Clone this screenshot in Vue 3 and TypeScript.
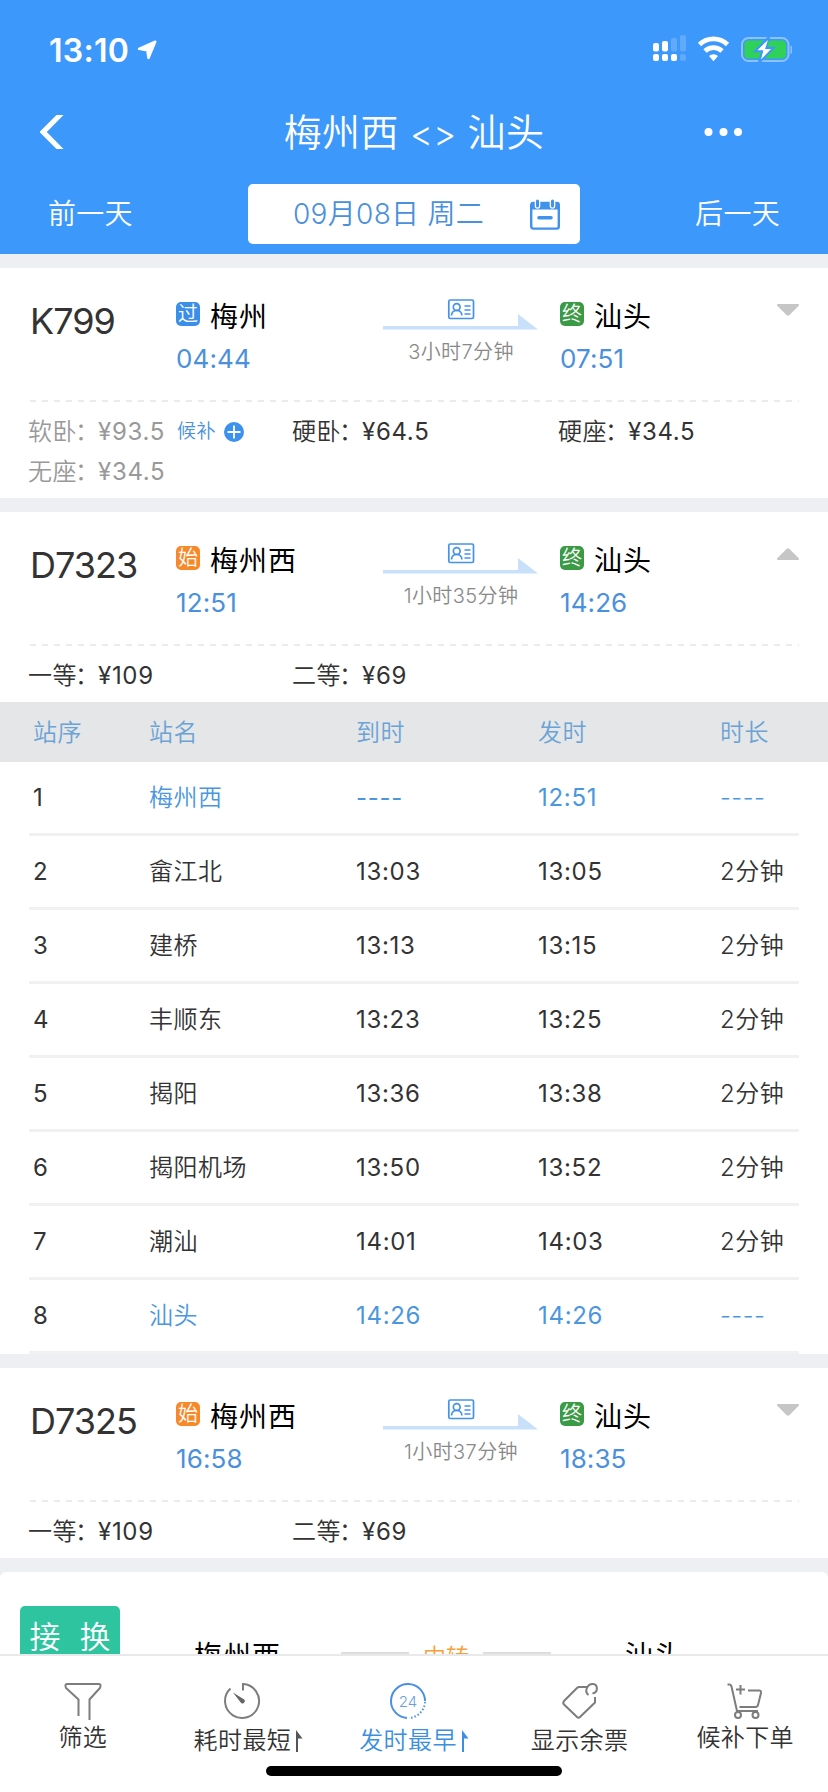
<script setup lang="ts">
interface Seat {
  label: string
  price: string
  soldOut?: boolean
  waitlist?: boolean
}

interface Stop {
  no: number
  name: string
  arrive: string
  depart: string
  stay: string
  edge?: boolean
}

interface Train {
  code: string
  kind: 'pass' | 'start'
  badge: string
  from: string
  depart: string
  to: string
  arrive: string
  duration: string
  seats: Seat[]
  stops?: Stop[]
}

const none = '----'

const trains: Train[] = [
  {
    code: 'K799', kind: 'pass', badge: '过', from: '梅州', depart: '04:44', to: '汕头', arrive: '07:51', duration: '3小时7分钟',
    seats: [
      { label: '软卧', price: '¥93.5', soldOut: true, waitlist: true },
      { label: '硬卧', price: '¥64.5' },
      { label: '硬座', price: '¥34.5' },
      { label: '无座', price: '¥34.5', soldOut: true },
    ],
  },
  {
    code: 'D7323', kind: 'start', badge: '始', from: '梅州西', depart: '12:51', to: '汕头', arrive: '14:26', duration: '1小时35分钟',
    seats: [{ label: '一等', price: '¥109' }, { label: '二等', price: '¥69' }],
    stops: [
      { no: 1, name: '梅州西', arrive: none, depart: '12:51', stay: none, edge: true },
      { no: 2, name: '畲江北', arrive: '13:03', depart: '13:05', stay: '2分钟' },
      { no: 3, name: '建桥', arrive: '13:13', depart: '13:15', stay: '2分钟' },
      { no: 4, name: '丰顺东', arrive: '13:23', depart: '13:25', stay: '2分钟' },
      { no: 5, name: '揭阳', arrive: '13:36', depart: '13:38', stay: '2分钟' },
      { no: 6, name: '揭阳机场', arrive: '13:50', depart: '13:52', stay: '2分钟' },
      { no: 7, name: '潮汕', arrive: '14:01', depart: '14:03', stay: '2分钟' },
      { no: 8, name: '汕头', arrive: '14:26', depart: '14:26', stay: none, edge: true },
    ],
  },
  {
    code: 'D7325', kind: 'start', badge: '始', from: '梅州西', depart: '16:58', to: '汕头', arrive: '18:35', duration: '1小时37分钟',
    seats: [{ label: '一等', price: '¥109' }, { label: '二等', price: '¥69' }],
  },
]
</script>

<template>
  <div class="screen">
    <header class="top">
      <div class="status">
        <span class="clock">13:10</span>
        <svg class="locate" width="20" height="20" viewBox="0 0 20 20"><path d="M18.300 1.700L11.500 18 10.300 10.300 2 8.900z" fill="#fff" stroke="#fff" stroke-width="2.400" stroke-linejoin="round" /></svg>
        <svg class="signals" width="140" height="28" viewBox="0 0 140 28">
          <g fill="#fff">
            <rect x="1" y="8" width="6" height="8.500" rx="2" /><rect x="10" y="6" width="6" height="10.500" rx="2" />
            <rect x="1" y="19" width="6" height="7" rx="2" /><rect x="10" y="19" width="6" height="7" rx="2" /><rect x="19" y="19" width="6" height="7" rx="2" />
            <g opacity=".18"><rect x="19" y="3" width="6" height="13.500" rx="2" /><rect x="28" y="0" width="6" height="16.500" rx="2" /><rect x="28" y="19" width="6" height="7" rx="2" /></g>
          </g>
          <g fill="none" stroke="#fff" stroke-width="4.800">
            <path d="M47.500 9.500a20 20 0 0 1 28 0" /><path d="M53 15.900a12.500 12.500 0 0 1 17 0" />
          </g>
          <path d="M57 21a6.500 6.500 0 0 1 9 0l-4.500 5.300z" fill="#fff" />
          <rect x="90" y="3" width="46.500" height="23" rx="6.500" fill="none" stroke="#8cc3ff" stroke-width="2" />
          <path d="M138.500 10.500v8.500c3.700-1.500 3.700-7 0-8.500z" fill="#8cc3ff" />
          <rect x="92.500" y="5.500" width="41.500" height="18" rx="4" fill="#30d158" />
          <path d="M117 2l-13.500 14h7l-3.500 11.500 14-14.500h-7.500z" fill="#fff" stroke="#3d98fb" stroke-width="2.500" />
          <path d="M116 5l-10.500 10.300h6l-2.500 9.200 10-10.500h-6z" fill="#fff" />
        </svg>
      </div>
      <div class="nav">
        <svg class="back" width="26" height="36" viewBox="0 0 26 36"><path d="M17.500 1h7L7.800 18l16.700 17h-7L1 18.500v-1z" fill="#fff" /></svg>
        <h1 class="title">梅州西 <span class="swap">&lt;&gt;</span> 汕头</h1>
        <svg class="more" width="40" height="10" viewBox="0 0 40 10" fill="#fff"><circle cx="4.500" cy="5" r="4" /><circle cx="19.500" cy="5" r="4" /><circle cx="34" cy="5" r="4" /></svg>
      </div>
      <div class="days">
        <span class="day">前一天</span>
        <div class="date">
          <span class="date-text">09月08日 周二</span>
          <svg width="30" height="31" viewBox="0 0 30 31">
            <rect x="1.200" y="4" width="27.600" height="25.600" rx="2" fill="#fff" stroke="#4192ec" stroke-width="2.400" />
            <rect x="1" y="3" width="28" height="7.500" fill="#4192ec" />
            <g stroke-linecap="round"><path d="M7.500 2.500v4.500M22.500 2.500v4.500" stroke="#fff" stroke-width="5.600" /><path d="M7.500 2v5M22.500 2v5" stroke="#4192ec" stroke-width="3" /><path d="M9 18.700h12" stroke="#4192ec" stroke-width="3.600" /></g>
          </svg>
        </div>
        <span class="day">后一天</span>
      </div>
    </header>

    <main class="list">
      <section v-for="t in trains" :key="t.code" class="card">
        <div class="summary">
          <span class="code">{{ t.code }}</span>
          <div class="place">
            <div class="station"><i class="badge" :class="t.kind">{{ t.badge }}</i><b>{{ t.from }}</b></div>
            <span class="time">{{ t.depart }}</span>
          </div>
          <div class="route">
            <svg width="156" height="32" viewBox="0 0 156 32">
              <path d="M0 27h135V15l20 15.500H0z" fill="#c9e0fb" />
              <g fill="none" stroke="#4592e8" stroke-width="1.700">
                <rect x="65.800" y="1" width="24.700" height="18.500" rx="1.500" />
                <circle cx="73.700" cy="8" r="3.400" /><path d="M68.500 16.500c.2-3 2-5 5.200-5s5 2 5.200 5M81.500 7h6M81.500 11h6M81.500 15h6" />
              </g>
            </svg>
            <span class="duration">{{ t.duration }}</span>
          </div>
          <div class="place">
            <div class="station"><i class="badge end">终</i><b>{{ t.to }}</b></div>
            <span class="time">{{ t.arrive }}</span>
          </div>
          <svg class="caret" :class="{ open: t.stops }" width="24" height="12" viewBox="0 0 24 12"><path d="M1.500 0h21q1 1 0 2L13.500 11q-1.500 1.500-3 0L1.500 2q-1-1 0-2z" fill="#c6c6c6" /></svg>
        </div>
        <svg class="dash" width="770" height="2"><path d="M1 1H770" stroke="#ebebeb" stroke-width="2" stroke-dasharray="6 6" /></svg>
        <div class="seats">
          <div v-for="s in t.seats" :key="s.label" class="seat" :class="{ out: s.soldOut }">
            <span class="seat-label">{{ s.label }}<span class="colon">：</span></span><span class="price">{{ s.price }}</span>
            <template v-if="s.waitlist">
              <span class="wait">候补</span>
              <svg width="20" height="20" viewBox="0 0 20 20"><circle cx="10" cy="10" r="10" fill="#3c90ee" /><path d="M3.500 10h13M10 3.500v13" stroke="#fff" stroke-width="1.800" /></svg>
            </template>
          </div>
        </div>
        <div v-if="t.stops" class="stops">
          <div class="row head"><span>站序</span><span>站名</span><span>到时</span><span>发时</span><span>时长</span></div>
          <div v-for="p in t.stops" :key="p.no" class="row" :class="{ edge: p.edge }">
            <span class="no">{{ p.no }}</span><span>{{ p.name }}</span><span class="num">{{ p.arrive }}</span><span class="num">{{ p.depart }}</span><span>{{ p.stay }}</span>
          </div>
        </div>
      </section>

      <section class="card transfer">
        <span class="tag"><span>接</span><span>换</span></span>
        <b class="t-from">梅州西</b>
        <div class="via"><i></i><span>中转</span><i></i></div>
        <b>汕头</b>
      </section>
    </main>

    <footer class="tabs">
      <div class="tab high">
        <svg width="38" height="38" viewBox="0 0 38 38"><path d="M14.500 34V17.500L2 6Q.5 2 3 2h32q2.500 0 1 4L25.500 17.500V38" /></svg>
        <span>筛选</span>
      </div>
      <div class="tab sort">
        <svg width="38" height="38" viewBox="0 0 38 38"><path d="M20 8.500V2A17 17 0 1 1 7.500 6.500" /><path d="M10 10.500l10.800 6.700a2.300 2.300 0 1 1-3.300 3.100z" class="solid" /></svg>
        <span>耗时最短<svg class="flag" width="8" height="22" viewBox="0 0 8 22"><path d="M1 0l6.500 8.500H3V22H1z" fill="#555" /></svg></span>
      </div>
      <div class="tab sort active">
        <svg width="38" height="38" viewBox="0 0 38 38"><path d="M18 36A17 17 0 1 1 36 19" /><path d="M36 20A17 17 0 0 1 20 36" stroke-dasharray="1.500 2" /><text x="19" y="24.500" text-anchor="middle">24</text></svg>
        <span>发时最早<svg class="flag" width="8" height="22" viewBox="0 0 8 22"><path d="M1 0l6.500 8.500H3V22H1z" fill="#3b8fe0" /></svg></span>
      </div>
      <div class="tab">
        <svg width="38" height="38" viewBox="0 0 38 38"><path d="M26 5H18q-1 0-2 1L3 19q-1.500 2 0 3.500L16 35q1.500 1.500 3 0L34 20.500V15" /><path d="M27.500 13C22.500 9 27 1.500 32 2c5 .5 5.500 8-.5 9.500" /></svg>
        <span>显示余票</span>
      </div>
      <div class="tab high">
        <svg width="38" height="38" viewBox="0 0 38 38"><path d="M1.500 2.500h2q1.500 0 2 2L11 29h21M22 8.500h11q2.500 0 2 2.500l-3 12q-.5 2-2.500 2H13.500M10 7.500h9M14.500 3v9.500" /><circle cx="12" cy="33" r="3" /><circle cx="29.500" cy="33" r="3" /></svg>
        <span>候补下单</span>
      </div>
      <div class="home"></div>
    </footer>
  </div>
</template>

<style>
body {
  margin: 0;
  overflow: hidden;
}
</style>

<style scoped>
.screen {
  width: 828px;
  height: 1792px;
  display: flex;
  flex-direction: column;
  overflow: hidden;
  background: #eeeff2;
  font-family: Inter, "Noto Sans CJK SC", sans-serif;
  font-weight: 350;
  color: #333;
}
svg { display: block; flex: none; }
b, i { font-weight: inherit; font-style: normal; }

.top {
  height: 254px;
  flex: none;
  background: #3d98fb;
  color: #fff;
}
.status {
  height: 65px;
  padding: 35px 36px 0 49px;
  box-sizing: border-box;
  display: flex;
  align-items: flex-start;
}
.clock { font-size: 32px; line-height: 31px; font-weight: 600; letter-spacing: .3px; width: 88px; }
.locate { margin-top: 5px; }
.signals { margin-left: auto; }
.nav {
  height: 119px;
  display: grid;
  grid-template-columns: 200px 428px 200px;
  align-items: center;
  padding-top: 15px;
  box-sizing: border-box;
}
.back { margin-left: 39px; }
.title { margin: 0; text-align: center; font-size: 38px; line-height: 50px; font-weight: inherit; letter-spacing: .4px; }
.swap { font-size: 35px; }
.more { margin-left: 76px; }
.days {
  display: flex;
  justify-content: space-between;
  align-items: center;
  height: 60px;
  padding: 0 48px 0 48px;
}
.day { font-size: 28px; letter-spacing: .3px; line-height: 62px; }
.date {
  width: 332px;
  height: 60px;
  box-sizing: border-box;
  padding: 0 20px 0 45px;
  border-radius: 5px;
  background: #fff;
  color: #4a90dc;
  display: flex;
  align-items: center;
  justify-content: space-between;
}
.date-text { font-size: 28px; line-height: 62px; white-space: nowrap; letter-spacing: .3px; }

.list {
  flex: 1;
  min-height: 0;
  overflow: hidden;
  padding-top: 14px;
  display: flex;
  flex-direction: column;
  gap: 14px;
}
.card { flex: none; background: #fff; }
.summary {
  height: 132px;
  display: grid;
  grid-template-columns: 146px 207px 177px 216px 1fr;
  padding-left: 30px;
  align-items: start;
}
.code { font-size: 36px; line-height: 41px; letter-spacing: -1px; font-weight: 400; margin-top: 33px; }
.place { padding-top: 32px; }
.station { display: flex; align-items: center; height: 32px; }
.station b { font-size: 28px; line-height: 34px; letter-spacing: 1px; font-weight: 400; color: #000; margin: 2px 0 0 10px; }
.badge {
  width: 24px;
  height: 24px;
  margin-top: -4px;
  border-radius: 5px;
  color: #fff;
  font-size: 20px;
  line-height: 24px;
  text-align: center;
}
.pass { background: #3c8fe8; }
.start { background: #f68a2b; }
.end { background: #3a9a45; }
.time { display: block; margin-top: 11px; font-size: 26px; line-height: 32px; font-weight: 400; letter-spacing: .1px; color: #4a90dc; }
.route { padding-top: 31px; width: 156px; }
.duration { display: block; text-align: center; font-size: 20px; line-height: 26px; letter-spacing: .4px; margin-top: 8px; color: #888; white-space: nowrap; }
.caret { margin: 36px 0 0; }
.caret.open { transform: rotate(180deg); }
.dash { margin-left: 29px; }
.seats {
  display: grid;
  grid-template-columns: 264px 266px 1fr;
  grid-auto-rows: 40px;
  padding: 10px 0 6px 28px;
}
.seat { display: flex; align-items: center; font-size: 24px; line-height: 42px; white-space: nowrap; letter-spacing: .5px; }
.seat-label { width: 70px; }
.colon { margin-left: -2px; }
.price { font-weight: 400; letter-spacing: .7px; }
.out { color: #999; }
.wait { font-size: 19px; letter-spacing: .5px; color: #4a90dc; margin: 0 8px 0 12px; }

.row {
  display: grid;
  grid-template-columns: 116px 207px 182px 182px 1fr;
  height: 74px;
  margin: 0 29px;
  padding-left: 4px;
  box-sizing: border-box;
  border-bottom: 3px solid #f1f1f2;
  font-size: 24px;
  line-height: 72px;
  letter-spacing: .5px;
}
.num, .no { font-weight: 400; letter-spacing: .7px; }
.row.head {
  height: 60px;
  margin: 0;
  padding-left: 33px;
  border: 0;
  background: #e5e6e7;
  color: #6ba3d6;
  line-height: 62px;
}
.edge { color: #4a97e0; }
.edge .no { color: #333; }

.transfer {
  height: 200px;
  border-radius: 6px 6px 0 0;
  display: flex;
  align-items: flex-start;
  padding: 34px 0 0 20px;
}
.tag {
  width: 100px;
  height: 64px;
  box-sizing: border-box;
  border-radius: 5px;
  background: #2fc4a0;
  color: #fff;
  font-size: 31px;
  line-height: 62px;
  display: flex;
  justify-content: center;
  gap: 19px;
}
.transfer b { font-size: 28px; line-height: 32px; letter-spacing: 1px; font-weight: 400; color: #000; margin-top: 34px; }
.transfer .t-from { margin-left: 74px; width: 147px; }
.via { width: 284px; display: flex; gap: 14px; margin-top: 38px; align-items: flex-start; font-size: 23px; line-height: 26px; color: #f5a03c; }
.via i { width: 68px; height: 2px; margin-top: 8px; background: #ddd; }

.tabs {
  position: relative;
  height: 138px;
  box-sizing: border-box;
  flex: none;
  border-top: 2px solid #e9e9eb;
  background: #fff;
  display: grid;
  grid-template-columns: repeat(5, 1fr);
}
.tab { display: flex; flex-direction: column; align-items: center; padding-top: 26px; font-size: 24px; }
.tab > svg { fill: none; stroke: #7d7d7d; stroke-width: 2; }
.tab.sort > svg { margin-right: 12px; }
.tab > svg .solid { fill: #666; stroke: none; }
.tab > span { display: flex; align-items: center; line-height: 32px; margin-top: 5px; white-space: nowrap; letter-spacing: .4px; }
.tab.high > span { margin-top: 2px; }
.flag { margin-left: 4px; }
.active { color: #3b8fe0; }
.active > svg { stroke: #4a90e2; }
.active text { font-size: 15px; fill: #6a9fdc; stroke: none; }
.home {
  position: absolute;
  left: 266px;
  bottom: 16px;
  width: 296px;
  height: 10px;
  border-radius: 5px;
  background: #000;
}
</style>
